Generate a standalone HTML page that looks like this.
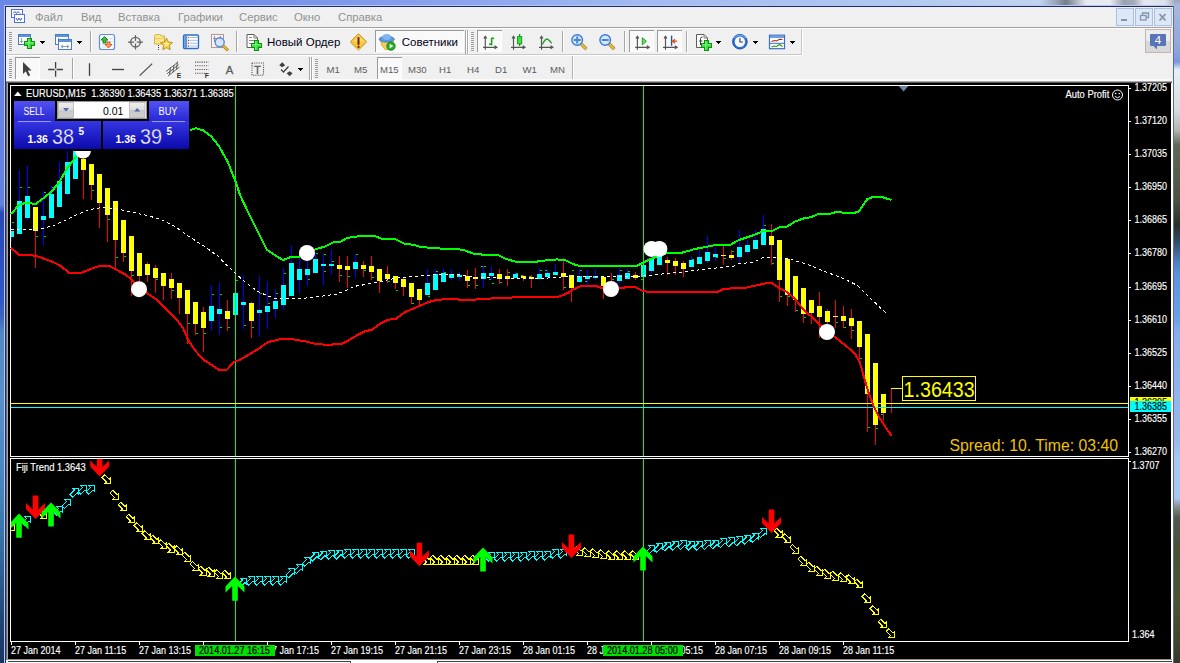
<!DOCTYPE html>
<html><head><meta charset="utf-8"><title>EURUSD,M15</title>
<style>
html,body{margin:0;padding:0;background:#000;overflow:hidden}
body{width:1180px;height:663px;position:relative;font-family:"Liberation Sans", sans-serif}
#frame{position:absolute;left:0;top:0;width:1180px;height:663px;background:linear-gradient(180deg,#6c88e6 0px,#6280de 205px,#2848b8 213px,#2c50c0 260px,#3058c8 300px,#3a64c0 316px,#5088c0 332px,#5890c8 400px,#4c8ac4 450px,#4282b8 500px,#3472a4 540px,#2a5c8c 580px,#1f4674 620px,#183460 663px)}
#topstrip{position:absolute;left:0;top:0;width:1180px;height:6px;background:linear-gradient(90deg,#6a86e6 0px,#7590e8 250px,#8ea6ee 480px,#a3bbf1 650px,#aec8f2 880px,#c0d4f0 1040px,#9aa4b8 1056px,#747c8c 1066px,#aab2c0 1076px,#e6eaf0 1086px,#e8ecf2 1110px,#9aa2b0 1124px,#a4acb8 1134px,#e4e8ee 1144px,#dde2ea 1165px,#8a94a8 1180px)}
#rightstrip{position:absolute;left:1174px;top:0;width:6px;height:663px;background:linear-gradient(180deg,#9aa6c0 0px,#a8b8e0 6px,#8ea4dc 50px,#7a98e0 62px,#e4f2fb 70px,#d8dce0 110px,#b4b6b4 130px,#606858 145px,#4c5242 200px,#283028 225px,#304860 240px,#4c80c0 262px,#5a94e0 275px,#6aa0e8 318px,#88aeec 332px,#98b8f0 440px,#a6c6f4 455px,#a8c8f4 498px,#808888 508px,#505850 518px,#485038 550px,#4c5436 600px,#40462f 640px,#34382c 663px)}
#win{position:absolute;left:6px;top:7px;width:1167px;height:656px;background:#f0f0f0}
svg{position:absolute;left:0;top:0}
text{font-family:"Liberation Sans", sans-serif}
</style></head><body>
<div id="frame"></div><div id="topstrip"></div><div id="rightstrip"></div>
<div id="win"></div>
<svg width="1180" height="663" viewBox="0 0 1180 663">

<rect x="4" y="5" width="1170" height="1" fill="#b9c6f2" />
<rect x="4" y="5" width="1" height="658" fill="#b9c6f2" />
<rect x="5" y="6" width="1169" height="1" fill="#1c2a6e" />
<rect x="5" y="6" width="1" height="657" fill="#1c2a6e" />
<rect x="1173" y="6" width="1" height="657" fill="#667074" />
<rect x="6" y="7" width="1166" height="20" fill="#f0f0f0" />
<rect x="6" y="27" width="1166" height="1" fill="#a0a0a0" />
<rect x="6" y="28" width="1166" height="1" fill="#ffffff" />
<rect x="6" y="54" width="796" height="1" fill="#c8c8c8" />
<rect x="6" y="55" width="796" height="1" fill="#ffffff" />
<rect x="801" y="29" width="1" height="26" fill="#c8c8c8" />
<rect x="802" y="29" width="1" height="27" fill="#ffffff" />
<rect x="572" y="56" width="1" height="24" fill="#b4b4b4" />
<rect x="573" y="56" width="1" height="24" fill="#ffffff" />
<rect x="6" y="79" width="1166" height="2" fill="#fafafa" />
<rect x="6" y="81" width="1166" height="1" fill="#a8a8a8" />
<rect x="6" y="82" width="1166" height="1" fill="#585858" />
<rect x="6" y="83" width="1165" height="576" fill="#000" />
<rect x="1171" y="83" width="2" height="577" fill="#ffffff" />
<rect x="6" y="83" width="1" height="576" fill="#6e6e6e" />
<rect x="7" y="83" width="1" height="576" fill="#a8a8a8" />
<rect x="6" y="659" width="1166" height="1" fill="#8c8c8c" />
<rect x="8" y="660" width="1164" height="3" fill="#ffffff" />
<rect x="8" y="661" width="343" height="1" fill="#404040" />
<rect x="437" y="661" width="735" height="1" fill="#404040" />
<rect x="350" y="661" width="1" height="2" fill="#404040" />
<rect x="437" y="661" width="1" height="2" fill="#404040" />
<g font-size="11.3" fill="#929292">
<text x="35" y="21">Файл</text>
<text x="81" y="21">Вид</text>
<text x="118" y="21">Вставка</text>
<text x="178" y="21">Графики</text>
<text x="239" y="21">Сервис</text>
<text x="294" y="21">Окно</text>
<text x="338" y="21">Справка</text>
</g>
<g fill="#fff" stroke="#4f70e8" stroke-width="1"><rect x="11.5" y="9.5" width="11" height="8"/><path d="M13 13.500 l2 -2 1.500 2 1.500 -2 2 2" fill="none" stroke="#3558d8"/><rect x="14.5" y="14.500" width="10" height="8"/></g>
<path d="M16 18 l1.5 2.5 l1.5 -2.5 l1.5 2.5 l1.5 -2.5" stroke="#3558d8" fill="none" stroke-width="1"/>
<rect x="1116.5" y="8.5" width="17" height="17" fill="#dde8f6" stroke="#a9c0e2"/>
<rect x="1135.5" y="8.5" width="17" height="17" fill="#dde8f6" stroke="#a9c0e2"/>
<rect x="1154.5" y="8.5" width="17" height="17" fill="#dde8f6" stroke="#a9c0e2"/>
<rect x="1121" y="19" width="6" height="2" fill="#8494ac"/>
<g fill="none" stroke="#8494ac" stroke-width="1.3"><rect x="1140.5" y="15.5" width="5.500" height="4.500"/><path d="M1142.5 15 v-2 h6 v4.500 h-2"/></g>
<path d="M1159.500 14 l6 6.500 M1165.500 14 l-6 6.500" stroke="#8494ac" stroke-width="1.8"/>
<rect x="1145.5" y="29.5" width="25" height="23" fill="#ececec" stroke="#c4b4b4"/>
<rect x="1146" y="41" width="24" height="11" fill="#d8d8d8"/>
<path d="M1151 34 h14 a1 1 0 0 1 1 1 v10 a1 1 0 0 1 -1 1 h-8 v3.5 l-3.5 -3.5 h-2.500 a1 1 0 0 1 -1 -1 v-10 a1 1 0 0 1 1 -1z" fill="#5a74b8"/>
<text x="1154.8" y="44" font-size="11.5" fill="#fff" >4</text>
<rect x="9" y="32" width="3" height="1" fill="#9c9c9c" />
<rect x="9" y="34" width="3" height="1" fill="#9c9c9c" />
<rect x="9" y="36" width="3" height="1" fill="#9c9c9c" />
<rect x="9" y="38" width="3" height="1" fill="#9c9c9c" />
<rect x="9" y="40" width="3" height="1" fill="#9c9c9c" />
<rect x="9" y="42" width="3" height="1" fill="#9c9c9c" />
<rect x="9" y="44" width="3" height="1" fill="#9c9c9c" />
<rect x="9" y="46" width="3" height="1" fill="#9c9c9c" />
<rect x="9" y="48" width="3" height="1" fill="#9c9c9c" />
<rect x="9" y="50" width="3" height="1" fill="#9c9c9c" />
<rect x="9" y="59" width="3" height="1" fill="#9c9c9c" />
<rect x="9" y="61" width="3" height="1" fill="#9c9c9c" />
<rect x="9" y="63" width="3" height="1" fill="#9c9c9c" />
<rect x="9" y="65" width="3" height="1" fill="#9c9c9c" />
<rect x="9" y="67" width="3" height="1" fill="#9c9c9c" />
<rect x="9" y="69" width="3" height="1" fill="#9c9c9c" />
<rect x="9" y="71" width="3" height="1" fill="#9c9c9c" />
<rect x="9" y="73" width="3" height="1" fill="#9c9c9c" />
<rect x="9" y="75" width="3" height="1" fill="#9c9c9c" />
<rect x="9" y="77" width="3" height="1" fill="#9c9c9c" />
<rect x="315" y="59" width="3" height="1" fill="#9c9c9c" />
<rect x="315" y="61" width="3" height="1" fill="#9c9c9c" />
<rect x="315" y="63" width="3" height="1" fill="#9c9c9c" />
<rect x="315" y="65" width="3" height="1" fill="#9c9c9c" />
<rect x="315" y="67" width="3" height="1" fill="#9c9c9c" />
<rect x="315" y="69" width="3" height="1" fill="#9c9c9c" />
<rect x="315" y="71" width="3" height="1" fill="#9c9c9c" />
<rect x="315" y="73" width="3" height="1" fill="#9c9c9c" />
<rect x="315" y="75" width="3" height="1" fill="#9c9c9c" />
<rect x="315" y="77" width="3" height="1" fill="#9c9c9c" />
<rect x="471" y="32" width="3" height="1" fill="#9c9c9c" />
<rect x="471" y="34" width="3" height="1" fill="#9c9c9c" />
<rect x="471" y="36" width="3" height="1" fill="#9c9c9c" />
<rect x="471" y="38" width="3" height="1" fill="#9c9c9c" />
<rect x="471" y="40" width="3" height="1" fill="#9c9c9c" />
<rect x="471" y="42" width="3" height="1" fill="#9c9c9c" />
<rect x="471" y="44" width="3" height="1" fill="#9c9c9c" />
<rect x="471" y="46" width="3" height="1" fill="#9c9c9c" />
<rect x="471" y="48" width="3" height="1" fill="#9c9c9c" />
<rect x="471" y="50" width="3" height="1" fill="#9c9c9c" />
<rect x="90" y="31" width="1" height="21" fill="#a6a6a6" />
<rect x="91" y="31" width="1" height="21" fill="#ffffff" />
<rect x="236" y="31" width="1" height="21" fill="#a6a6a6" />
<rect x="237" y="31" width="1" height="21" fill="#ffffff" />
<rect x="562" y="31" width="1" height="21" fill="#a6a6a6" />
<rect x="563" y="31" width="1" height="21" fill="#ffffff" />
<rect x="624" y="31" width="1" height="21" fill="#a6a6a6" />
<rect x="625" y="31" width="1" height="21" fill="#ffffff" />
<rect x="686" y="31" width="1" height="21" fill="#a6a6a6" />
<rect x="687" y="31" width="1" height="21" fill="#ffffff" />
<rect x="465" y="30" width="1" height="24" fill="#a6a6a6" />
<rect x="466" y="30" width="1" height="24" fill="#ffffff" />
<rect x="467" y="30" width="1" height="24" fill="#a6a6a6" />
<rect x="468" y="30" width="1" height="24" fill="#ffffff" />
<rect x="72" y="58" width="1" height="21" fill="#a6a6a6" />
<rect x="73" y="58" width="1" height="21" fill="#ffffff" />
<rect x="309" y="57" width="1" height="23" fill="#a6a6a6" />
<rect x="310" y="57" width="1" height="23" fill="#ffffff" />
<rect x="311" y="57" width="1" height="23" fill="#a6a6a6" />
<rect x="312" y="57" width="1" height="23" fill="#ffffff" />
<rect x="375" y="30" width="89" height="22" fill="#f9f9f9"/>
<rect x="375" y="30" width="89" height="1" fill="#9a9a9a" />
<rect x="375" y="30" width="1" height="22" fill="#9a9a9a" />
<rect x="463" y="31" width="1" height="21" fill="#ffffff" />
<rect x="376" y="51" width="88" height="1" fill="#ffffff" />
<rect x="477" y="30" width="25" height="22" fill="#f9f9f9"/>
<rect x="477" y="30" width="25" height="1" fill="#9a9a9a" />
<rect x="477" y="30" width="1" height="22" fill="#9a9a9a" />
<rect x="501" y="31" width="1" height="21" fill="#ffffff" />
<rect x="478" y="51" width="24" height="1" fill="#ffffff" />
<rect x="629" y="30" width="25" height="22" fill="#f9f9f9"/>
<rect x="629" y="30" width="25" height="1" fill="#9a9a9a" />
<rect x="629" y="30" width="1" height="22" fill="#9a9a9a" />
<rect x="653" y="31" width="1" height="21" fill="#ffffff" />
<rect x="630" y="51" width="24" height="1" fill="#ffffff" />
<rect x="657" y="30" width="25" height="22" fill="#f9f9f9"/>
<rect x="657" y="30" width="25" height="1" fill="#9a9a9a" />
<rect x="657" y="30" width="1" height="22" fill="#9a9a9a" />
<rect x="681" y="31" width="1" height="21" fill="#ffffff" />
<rect x="658" y="51" width="24" height="1" fill="#ffffff" />
<rect x="15" y="57" width="25" height="22" fill="#f9f9f9"/>
<rect x="15" y="57" width="25" height="1" fill="#9a9a9a" />
<rect x="15" y="57" width="1" height="22" fill="#9a9a9a" />
<rect x="39" y="58" width="1" height="21" fill="#ffffff" />
<rect x="16" y="78" width="24" height="1" fill="#ffffff" />
<rect x="377" y="57" width="25" height="22" fill="#f9f9f9"/>
<rect x="377" y="57" width="25" height="1" fill="#9a9a9a" />
<rect x="377" y="57" width="1" height="22" fill="#9a9a9a" />
<rect x="401" y="58" width="1" height="21" fill="#ffffff" />
<rect x="378" y="78" width="24" height="1" fill="#ffffff" />
<path d="M40.0 41 h5 l-2.5 3z" fill="#000" shape-rendering="crispEdges"/>
<rect x="40.0" y="41" width="5" height="1" fill="#000" />
<rect x="41.0" y="42" width="3" height="1" fill="#000" />
<rect x="42.0" y="43" width="1" height="1" fill="#000" />
<path d="M77.0 41 h5 l-2.5 3z" fill="#000" shape-rendering="crispEdges"/>
<rect x="77.0" y="41" width="5" height="1" fill="#000" />
<rect x="78.0" y="42" width="3" height="1" fill="#000" />
<rect x="79.0" y="43" width="1" height="1" fill="#000" />
<path d="M716.0 41 h5 l-2.5 3z" fill="#000" shape-rendering="crispEdges"/>
<rect x="716.0" y="41" width="5" height="1" fill="#000" />
<rect x="717.0" y="42" width="3" height="1" fill="#000" />
<rect x="718.0" y="43" width="1" height="1" fill="#000" />
<path d="M753.0 41 h5 l-2.5 3z" fill="#000" shape-rendering="crispEdges"/>
<rect x="753.0" y="41" width="5" height="1" fill="#000" />
<rect x="754.0" y="42" width="3" height="1" fill="#000" />
<rect x="755.0" y="43" width="1" height="1" fill="#000" />
<path d="M790.0 41 h5 l-2.5 3z" fill="#000" shape-rendering="crispEdges"/>
<rect x="790.0" y="41" width="5" height="1" fill="#000" />
<rect x="791.0" y="42" width="3" height="1" fill="#000" />
<rect x="792.0" y="43" width="1" height="1" fill="#000" />
<path d="M298.0 68 h5 l-2.5 3z" fill="#000" shape-rendering="crispEdges"/>
<rect x="298.0" y="68" width="5" height="1" fill="#000" />
<rect x="299.0" y="69" width="3" height="1" fill="#000" />
<rect x="300.0" y="70" width="1" height="1" fill="#000" />
<rect x="18.5" y="34.5" width="12" height="10" fill="#fdfdff" stroke="#4a7cc8"/><rect x="19" y="35" width="11" height="2" fill="#5a94dc"/><path d="M21.500 38 v5 M20 41.500 h3" stroke="#8a9cc0" fill="none"/>
<polygon points="27,38 32,38 32,41 35,41 35,46 32,46 32,49 27,49 27,46 24,46 24,41 27,41" fill="#0f8f12"/>
<polygon points="28,39 31,39 31,42 34,42 34,45 31,45 31,48 28,48 28,45 25,45 25,42 28,42" fill="#2fd834"/>
<rect x="28" y="39" width="1.5" height="9" fill="#7cf07e" opacity="0.8"/><rect x="25" y="42" width="9" height="1.5" fill="#7cf07e" opacity="0.8"/>
<rect x="55.5" y="34.5" width="13" height="10" fill="#fdfdff" stroke="#4a7cc8"/><rect x="56" y="35" width="12" height="2" fill="#5a94dc"/><path d="M58.500 38 v5 M58 41.500 h8 M64 40 l2 1.500 -2 1.500" stroke="#8a9cc0" fill="none"/>
<rect x="58.5" y="39.5" width="13" height="10" fill="#fdfdff" stroke="#4a7cc8"/><rect x="59" y="40" width="12" height="2" fill="#5a94dc"/><path d="M61 46.500 h8 M63 45 l-2 1.500 2 1.500 M67 45 l2 1.500 -2 1.500" stroke="#8a9cc0" fill="none"/>
<rect x="99.5" y="34.5" width="15" height="15" rx="2" fill="#fbfcff" stroke="#5a8ee0" stroke-width="1.2"/><path d="M109 38.500 h4 M109 41.500 h4 M102 44.500 h4 M102 47 h4" stroke="#d8dce8"/>
<path d="M104.500 36.500 l3.500 3.500 h-2 v3 h-3 v-3 h-2z" fill="#38c038" stroke="#0f8010" stroke-width="0.9"/><path d="M108.500 48 l-3.500 -3.500 h2 v-2.500 h3 v2.500 h2z" fill="#f0a060" stroke="#e04818" stroke-width="0.9"/>
<circle cx="135.500" cy="42.200" r="4.800" fill="none" stroke="#646464" stroke-width="1.4"/><path d="M135.500 35 v6 M135.500 43.500 v6 M128 42.200 h6.200 M136.800 42.200 h6.200" stroke="#646464" stroke-width="1.2"/>
<path d="M154.500 36.500 q0 -2 2 -2 h3 q1.500 0 2 1.500 h3 v8 h-10z" fill="#fae68c" stroke="#d4aa38" stroke-width="0.9"/><path d="M155 38.500 h9.500" stroke="#e8c860" stroke-width="0.8"/>
<path d="M158.500 45 v5" stroke="#404040" stroke-dasharray="1,1"/>
<path d="M166.500 38.200 l1.900 3.800 4.100 .6 -3 2.900 .7 4.200 -3.700 -2 -3.700 2 .7 -4.200 -3 -2.900 4.100 -.6z" fill="#f6d040" stroke="#b48a14" stroke-width="0.9"/><path d="M166.500 41 l1 2 2 .3 -1.500 1.400 .4 2 -1.900 -1 -1.900 1 .4 -2 -1.500 -1.400 2 -.3z" fill="#fcec98"/>
<rect x="183.500" y="35" width="15" height="13.500" rx="1.200" fill="#ffffff" stroke="#2c6cc4" stroke-width="1.300"/><rect x="184.200" y="35.700" width="3" height="12.200" fill="#5a94dc"/><path d="M190 37.500 h8 M190 40.300 h8 M190 43.200 h8 M190 46 h8" stroke="#86aee8" stroke-width="0.8"/><path d="M188 37.500 h1.200 M188 43.200 h1.200" stroke="#e02010" stroke-width="1.2"/><path d="M188 40.300 h1.200 M188 46 h1.200" stroke="#202020" stroke-width="1"/>
<rect x="211.500" y="34.500" width="12" height="13" fill="#f6f2f0" stroke="#b49898"/><path d="M214.500 36 v6 M220.500 36 v5 M213 38.500 h9" stroke="#8a94b0" fill="none"/><circle cx="219.700" cy="42.200" r="4.500" fill="#d2e4fa" fill-opacity="0.85" stroke="#5a8cd8" stroke-width="1.400"/><path d="M223.200 45.700 l4.800 4.800" stroke="#a87c10" stroke-width="3"/><path d="M223.200 45.700 l4.600 4.600" stroke="#e8c040" stroke-width="1.600"/>
<path d="M247 34.500 h7 l3.500 3.500 v9.500 h-10.500z" fill="#fff" stroke="#5c5c5c"/><path d="M254 34.500 v3.500 h3.500" fill="none" stroke="#5c5c5c" stroke-width="0.8"/><path d="M249 37.500 h3 M249 40.500 h6 M249 43.500 h3" stroke="#8a8a8a" stroke-width="1.2"/>
<polygon points="254,40 259,40 259,43 262,43 262,48 259,48 259,51 254,51 254,48 251,48 251,43 254,43" fill="#0f8f12"/>
<polygon points="255,41 258,41 258,44 261,44 261,47 258,47 258,50 255,50 255,47 252,47 252,44 255,44" fill="#2fd834"/>
<rect x="255" y="41" width="1.5" height="9" fill="#7cf07e" opacity="0.8"/><rect x="252" y="44" width="9" height="1.5" fill="#7cf07e" opacity="0.8"/>
<text x="267" y="45.6" font-size="11.5" fill="#000018" >Новый Ордер</text>
<path d="M358.500 34.200 l7.200 7.200 q.500 .500 0 1 l-7.200 7.200 q-.500 .500 -1 0 l-7.200 -7.200 q-.500 -.500 0 -1 l7.200 -7.200 q.500 -.500 1 0z" transform="translate(.5,0)" fill="#f4c838" stroke="#c8941a"/><path d="M358.500 36 l5.500 5.500 h-11z" transform="translate(.5,0)" fill="#fbe27a" opacity="0.8"/><rect x="357.500" y="37" width="2" height="8" rx="0.800" fill="#7c1c00"/><rect x="357.500" y="45.800" width="2" height="2" fill="#7c1c00"/>
<path d="M380.500 40 h13 q0 5 -4.500 9.500 h-4 q-4.500 -4.500 -4.500 -9.500z" fill="#f4cf58" stroke="#d0a020" stroke-width="0.8"/><ellipse cx="386.700" cy="39.200" rx="7.600" ry="3" fill="#5c98dc" stroke="#3a78c8" stroke-width="0.7"/><ellipse cx="386.700" cy="37" rx="4.200" ry="3" fill="#82b6ec"/><circle cx="391" cy="46.100" r="4.200" fill="#1fae22" stroke="#0c8010" stroke-width="0.8"/><path d="M389.700 43.800 v4.600 l3.600 -2.300z" fill="#fff"/>
<text x="401.8" y="45.8" font-size="11.5" fill="#000018" >Советники</text>
<path d="M485.3 36.500 v13.300 M483 47.300 h13.699999999999989 M483.8 38.500 l1.500 -2.300 1.500 2.300 M494.5 45.800 l2.400 1.500 -2.400 1.500" stroke="#555555" fill="none" stroke-width="1.150"/>
<path d="M491.600 37.700 v7.600 M489 44.300 h2.600 M491.600 38.300 h2.500" stroke="#18a01c" stroke-width="1.600" fill="none"/>
<path d="M513.5 36.500 v13.300 M511 47.300 h13.799999999999955 M512.0 38.500 l1.500 -2.300 1.500 2.300 M522.5999999999999 45.800 l2.400 1.500 -2.400 1.500" stroke="#555555" fill="none" stroke-width="1.150"/>
<path d="M519.600 34 v12" stroke="#18a01c" stroke-width="1.400"/><rect x="517.500" y="36.600" width="4.200" height="7.200" fill="#40e044" stroke="#18a01c" stroke-width="1"/>
<path d="M541.5 36.500 v13.300 M539 47.300 h13.700000000000045 M540.0 38.500 l1.500 -2.300 1.500 2.300 M550.5 45.800 l2.400 1.500 -2.400 1.500" stroke="#555555" fill="none" stroke-width="1.150"/>
<path d="M542.300 44.300 q2.500 -4.500 4.300 -5.300 q2 0 5 4.300" stroke="#2aa02e" stroke-width="1.400" fill="none"/>
<path d="M581.2 44 l5.200 5.200" stroke="#a07810" stroke-width="3.200"/><path d="M581.2 44 l5 5" stroke="#e6c244" stroke-width="1.800"/><circle cx="577.2" cy="40" r="5.300" fill="#d4e6fa" stroke="#3a7ad8" stroke-width="1.400"/><path d="M573.7 40 h7" stroke="#4a88c0" stroke-width="2"/>
<path d="M577.2 36.500 v7" stroke="#4a88c0" stroke-width="2"/>
<path d="M609.2 44 l5.200 5.200" stroke="#a07810" stroke-width="3.200"/><path d="M609.2 44 l5 5" stroke="#e6c244" stroke-width="1.800"/><circle cx="605.2" cy="40" r="5.300" fill="#d4e6fa" stroke="#3a7ad8" stroke-width="1.400"/><path d="M601.7 40 h7" stroke="#4a88c0" stroke-width="2"/>
<path d="M637.4 36.500 v13.300 M635.2 47.300 h13.799999999999955 M635.9 38.500 l1.500 -2.300 1.500 2.300 M646.8 45.800 l2.400 1.500 -2.400 1.500" stroke="#555555" fill="none" stroke-width="1.150"/>
<path d="M642.300 37.700 v7.100 l4 -3.500z" fill="#6ce070" stroke="#18a01c" stroke-width="1"/>
<path d="M665.5 36.500 v13.300 M663 47.300 h14 M664.0 38.500 l1.500 -2.300 1.500 2.300 M674.8 45.800 l2.400 1.500 -2.400 1.500" stroke="#555555" fill="none" stroke-width="1.150"/>
<path d="M671.600 35.600 v10.200" stroke="#1c58b0" stroke-width="1.400"/><path d="M677 41.200 h-4.500 m2.500 -2 l-2.500 2 2.500 2" stroke="#e04810" stroke-width="1.200" fill="none"/>
<path d="M696.500 34.500 h7.500 l3.500 3.500 v9.500 h-11z" fill="#fff" stroke="#5c5c5c"/><path d="M704 34.500 v3.500 h3.500" fill="none" stroke="#5c5c5c" stroke-width="0.8"/><path d="M700.500 45 v-6.500 q0 -1.500 2 -1.500 M699 41 h3.500" stroke="#404040" fill="none"/>
<polygon points="704,40 709,40 709,43 712,43 712,48 709,48 709,51 704,51 704,48 701,48 701,43 704,43" fill="#0f8f12"/>
<polygon points="705,41 708,41 708,44 711,44 711,47 708,47 708,50 705,50 705,47 702,47 702,44 705,44" fill="#2fd834"/>
<rect x="705" y="41" width="1.5" height="9" fill="#7cf07e" opacity="0.8"/><rect x="702" y="44" width="9" height="1.5" fill="#7cf07e" opacity="0.8"/>
<circle cx="739.900" cy="41.700" r="7.300" fill="#2c72dc" stroke="#1c50a8" stroke-width="1"/><circle cx="739.900" cy="41.700" r="5.200" fill="#f6f9ff"/><path d="M739.900 38 v4 h3" stroke="#404040" fill="none" stroke-width="1.100"/><path d="M734 38 q6 -6 12 0" stroke="#7cb0f4" fill="none" stroke-width="1"/>
<rect x="769.500" y="35.200" width="15" height="13.500" fill="#fff" stroke="#3c6cc4" stroke-width="1.200"/><rect x="770" y="35.700" width="14" height="2.300" fill="#6aa0e4"/><path d="M770 43.300 h14" stroke="#3c6cc4" stroke-width="1"/><path d="M771.500 41.500 l3 -1 2 .5 3 -1.800 3 .3" stroke="#b02810" fill="none" stroke-width="1.100"/><path d="M771.500 47 l3 -1 2 .5 3 -2 3 2" stroke="#18a01c" fill="none" stroke-width="1.100"/>
<path d="M23 62 v12 l2.800 -2.700 2.400 5 2 -1 -2.400 -4.900 h3.800z" fill="#404040"/>
<path d="M55.600 62 v6.500 M55.600 70.500 v6.200 M48.200 69.500 h6.400 M56.600 69.500 h6.300" stroke="#404040" stroke-width="1.300"/>
<path d="M89.500 63.200 v12.700" stroke="#404040" stroke-width="1.300"/><path d="M112 69.500 h12" stroke="#404040" stroke-width="1.300"/><path d="M139.700 75.600 l12.500 -12" stroke="#505050" stroke-width="1.300"/>
<path d="M166 71.500 l11.500 -9 M168 76 l11.500 -9 M167 73.800 l11.500 -9" stroke="#505050" stroke-width="0.900" fill="none"/><path d="M170.500 67.500 l-1 7 M174 65 l-1 7 M177.500 61.500 l-1 7.500" stroke="#505050" stroke-width="0.900" fill="none"/>
<text x="176.8" y="77.8" font-size="6.8" fill="#303030" font-weight="bold">E</text>
<path d="M195 62.100 h13.500 M195 65.700 h13.500 M195 69.500 h13.500 M195 73.300 h10" stroke="#505050" stroke-width="1.100" stroke-dasharray="1.100,1.100"/>
<text x="204.8" y="77.8" font-size="6.8" fill="#303030" font-weight="bold">F</text>
<text x="225.7" y="73.5" font-size="11.3" fill="#5a5a5a" stroke="#5a5a5a" stroke-width="0.300">A</text>
<rect x="252" y="63" width="11.500" height="12.200" fill="none" stroke="#505050" stroke-width="1.100" stroke-dasharray="1.100,1.100"/>
<text x="254" y="73.5" font-size="11.3" fill="#5a5a5a" stroke="#5a5a5a" stroke-width="0.300">T</text>
<path d="M282.200 62.300 l3 3 -3 2 -3 -2z M289.600 76.300 l3 -3 -3 -2 -3 2z" fill="#404040"/><path d="M281 69.500 l2.500 2.500 5 -5.500" stroke="#404040" fill="none" stroke-width="1.300"/>
<g font-size="9.600" fill="#5c5c5c">
<text x="326.6" y="72.800">M1</text>
<text x="354" y="72.800">M5</text>
<text x="380" y="72.800">M15</text>
<text x="408" y="72.800">M30</text>
<text x="439" y="72.800">H1</text>
<text x="467" y="72.800">H4</text>
<text x="495" y="72.800">D1</text>
<text x="522.5" y="72.800">W1</text>
<text x="550" y="72.800">MN</text>
</g>
<g shape-rendering="crispEdges">
<rect x="10" y="85" width="1119" height="1" fill="#fff" />
<rect x="10" y="85" width="1" height="372" fill="#fff" />
<rect x="1128" y="85" width="1" height="372" fill="#fff" />
<rect x="10" y="456" width="1119" height="1" fill="#fff" />
<rect x="10" y="458" width="1119" height="1" fill="#fff" />
<rect x="10" y="458" width="1" height="184" fill="#fff" />
<rect x="1128" y="458" width="1" height="184" fill="#fff" />
<rect x="10" y="641" width="1119" height="1" fill="#fff" />
<rect x="1129" y="88" width="2" height="1" fill="#fff" />
<rect x="1129" y="121" width="2" height="1" fill="#fff" />
<rect x="1129" y="154" width="2" height="1" fill="#fff" />
<rect x="1129" y="187" width="2" height="1" fill="#fff" />
<rect x="1129" y="220" width="2" height="1" fill="#fff" />
<rect x="1129" y="253" width="2" height="1" fill="#fff" />
<rect x="1129" y="287" width="2" height="1" fill="#fff" />
<rect x="1129" y="320" width="2" height="1" fill="#fff" />
<rect x="1129" y="353" width="2" height="1" fill="#fff" />
<rect x="1129" y="386" width="2" height="1" fill="#fff" />
<rect x="1129" y="419" width="2" height="1" fill="#fff" />
<rect x="1129" y="452" width="2" height="1" fill="#fff" />
<rect x="1129" y="461" width="2" height="1" fill="#fff" />
<rect x="11" y="642" width="1" height="3" fill="#fff" />
<rect x="75" y="642" width="1" height="3" fill="#fff" />
<rect x="139" y="642" width="1" height="3" fill="#fff" />
<rect x="203" y="642" width="1" height="3" fill="#fff" />
<rect x="267" y="642" width="1" height="3" fill="#fff" />
<rect x="331" y="642" width="1" height="3" fill="#fff" />
<rect x="395" y="642" width="1" height="3" fill="#fff" />
<rect x="459" y="642" width="1" height="3" fill="#fff" />
<rect x="523" y="642" width="1" height="3" fill="#fff" />
<rect x="587" y="642" width="1" height="3" fill="#fff" />
<rect x="651" y="642" width="1" height="3" fill="#fff" />
<rect x="715" y="642" width="1" height="3" fill="#fff" />
<rect x="779" y="642" width="1" height="3" fill="#fff" />
<rect x="843" y="642" width="1" height="3" fill="#fff" />
</g>
<g font-size="9" fill="#fff" stroke="#fff" stroke-width="0.15">
<text x="1134.5" y="91" font-size="10.0" transform="matrix(0.9000 0 0 1 113.450 0)">1.37205</text>
<text x="1134.5" y="124" font-size="10.0" transform="matrix(0.9000 0 0 1 113.450 0)">1.37120</text>
<text x="1134.5" y="157" font-size="10.0" transform="matrix(0.9000 0 0 1 113.450 0)">1.37035</text>
<text x="1134.5" y="190" font-size="10.0" transform="matrix(0.9000 0 0 1 113.450 0)">1.36950</text>
<text x="1134.5" y="223" font-size="10.0" transform="matrix(0.9000 0 0 1 113.450 0)">1.36865</text>
<text x="1134.5" y="256" font-size="10.0" transform="matrix(0.9000 0 0 1 113.450 0)">1.36780</text>
<text x="1134.5" y="290" font-size="10.0" transform="matrix(0.9000 0 0 1 113.450 0)">1.36695</text>
<text x="1134.5" y="323" font-size="10.0" transform="matrix(0.9000 0 0 1 113.450 0)">1.36610</text>
<text x="1134.5" y="356" font-size="10.0" transform="matrix(0.9000 0 0 1 113.450 0)">1.36525</text>
<text x="1134.5" y="389" font-size="10.0" transform="matrix(0.9000 0 0 1 113.450 0)">1.36440</text>
<text x="1134.5" y="422" font-size="10.0" transform="matrix(0.9000 0 0 1 113.450 0)">1.36355</text>
<text x="1134.5" y="455" font-size="10.0" transform="matrix(0.9000 0 0 1 113.450 0)">1.36270</text>
<text x="1132" y="469" font-size="10.0" transform="matrix(0.9000 0 0 1 113.200 0)">1.3707</text><text x="1132" y="638" font-size="10.0" transform="matrix(0.9000 0 0 1 113.200 0)">1.364</text>
<text x="11" y="654" font-size="10.0" transform="matrix(0.9000 0 0 1 1.100 0)">27 Jan 2014</text>
<text x="75" y="654" font-size="10.0" transform="matrix(0.9000 0 0 1 7.500 0)">27 Jan 11:15</text>
<text x="139" y="654" font-size="10.0" transform="matrix(0.9000 0 0 1 13.900 0)">27 Jan 13:15</text>
<text x="203" y="654" font-size="10.0" transform="matrix(0.9000 0 0 1 20.300 0)">27 Jan 15:15</text>
<text x="267" y="654" font-size="10.0" transform="matrix(0.9000 0 0 1 26.700 0)">27 Jan 17:15</text>
<text x="331" y="654" font-size="10.0" transform="matrix(0.9000 0 0 1 33.100 0)">27 Jan 19:15</text>
<text x="395" y="654" font-size="10.0" transform="matrix(0.9000 0 0 1 39.500 0)">27 Jan 21:15</text>
<text x="459" y="654" font-size="10.0" transform="matrix(0.9000 0 0 1 45.900 0)">27 Jan 23:15</text>
<text x="523" y="654" font-size="10.0" transform="matrix(0.9000 0 0 1 52.300 0)">28 Jan 01:15</text>
<text x="587" y="654" font-size="10.0" transform="matrix(0.9000 0 0 1 58.700 0)">28 Jan 03:15</text>
<text x="651" y="654" font-size="10.0" transform="matrix(0.9000 0 0 1 65.100 0)">28 Jan 05:15</text>
<text x="715" y="654" font-size="10.0" transform="matrix(0.9000 0 0 1 71.500 0)">28 Jan 07:15</text>
<text x="779" y="654" font-size="10.0" transform="matrix(0.9000 0 0 1 77.900 0)">28 Jan 09:15</text>
<text x="843" y="654" font-size="10.0" transform="matrix(0.9000 0 0 1 84.300 0)">28 Jan 11:15</text>
</g>
<rect x="195" y="645" width="80" height="11" fill="#00e000" shape-rendering="crispEdges"/>
<rect x="603" y="645" width="80" height="11" fill="#00e000" shape-rendering="crispEdges"/>
<text x="199" y="654" font-size="10.0" fill="#000" transform="matrix(0.9100 0 0 1 17.910 0)" stroke="#000" stroke-width="0.25">2014.01.27 16:15</text>
<text x="607" y="654" font-size="10.0" fill="#000" transform="matrix(0.9100 0 0 1 54.630 0)" stroke="#000" stroke-width="0.25">2014.01.28 05:00</text>
<g shape-rendering="crispEdges" fill="#00e000">
<rect x="20" y="187" width="2" height="1" fill="#00d800" />
<rect x="28" y="187" width="2" height="1" fill="#00d800" />
<rect x="12" y="222" width="2" height="1" fill="#00d800" />
<rect x="44" y="192" width="2" height="1" fill="#00d800" />
<rect x="52" y="187" width="2" height="1" fill="#00d800" />
<rect x="36" y="236" width="2" height="1" fill="#00d800" />
<rect x="44" y="236" width="2" height="1" fill="#00d800" />
<rect x="89" y="176" width="2" height="1" fill="#00d800" />
<rect x="92" y="190" width="2" height="1" fill="#00d800" />
<rect x="108" y="219" width="2" height="1" fill="#00d800" />
<rect x="116" y="257" width="2" height="1" fill="#00d800" />
<rect x="124" y="256" width="2" height="1" fill="#00d800" />
<rect x="132" y="275" width="2" height="1" fill="#00d800" />
<rect x="148" y="272" width="2" height="1" fill="#00d800" />
<rect x="156" y="279" width="2" height="1" fill="#00d800" />
<rect x="169" y="287" width="2" height="1" fill="#00d800" />
<rect x="172" y="290" width="2" height="1" fill="#00d800" />
<rect x="188" y="323" width="2" height="1" fill="#00d800" />
<rect x="196" y="333" width="2" height="1" fill="#00d800" />
<rect x="204" y="333" width="2" height="1" fill="#00d800" />
<rect x="212" y="294" width="2" height="1" fill="#00d800" />
<rect x="220" y="294" width="2" height="1" fill="#00d800" />
<rect x="220" y="327" width="2" height="1" fill="#00d800" />
<rect x="228" y="327" width="2" height="1" fill="#00d800" />
<rect x="236" y="280" width="2" height="1" fill="#00d800" />
<rect x="244" y="325" width="2" height="1" fill="#00d800" />
<rect x="252" y="327" width="2" height="1" fill="#00d800" />
<rect x="260" y="293" width="2" height="1" fill="#00d800" />
<rect x="268" y="303" width="2" height="1" fill="#00d800" />
<rect x="276" y="293" width="2" height="1" fill="#00d800" />
<rect x="284" y="273" width="2" height="1" fill="#00d800" />
<rect x="300" y="277" width="2" height="1" fill="#00d800" />
<rect x="308" y="279" width="2" height="1" fill="#00d800" />
<rect x="316" y="253" width="2" height="1" fill="#00d800" />
<rect x="324" y="254" width="2" height="1" fill="#00d800" />
<rect x="324" y="271" width="2" height="1" fill="#00d800" />
<rect x="332" y="261" width="2" height="1" fill="#00d800" />
<rect x="340" y="275" width="2" height="1" fill="#00d800" />
<rect x="348" y="276" width="2" height="1" fill="#00d800" />
<rect x="356" y="254" width="2" height="1" fill="#00d800" />
<rect x="356" y="254" width="2" height="1" fill="#00d800" />
<rect x="364" y="270" width="2" height="1" fill="#00d800" />
<rect x="372" y="277" width="2" height="1" fill="#00d800" />
<rect x="380" y="281" width="2" height="1" fill="#00d800" />
<rect x="388" y="281" width="2" height="1" fill="#00d800" />
<rect x="396" y="290" width="2" height="1" fill="#00d800" />
<rect x="412" y="303" width="2" height="1" fill="#00d800" />
<rect x="420" y="304" width="2" height="1" fill="#00d800" />
<rect x="428" y="296" width="2" height="1" fill="#00d800" />
<rect x="436" y="271" width="2" height="1" fill="#00d800" />
<rect x="444" y="272" width="2" height="1" fill="#00d800" />
<rect x="460" y="276" width="2" height="1" fill="#00d800" />
<rect x="468" y="285" width="2" height="1" fill="#00d800" />
<rect x="476" y="285" width="2" height="1" fill="#00d800" />
<rect x="481" y="266" width="2" height="1" fill="#00d800" />
<rect x="484" y="266" width="2" height="1" fill="#00d800" />
<rect x="489" y="279" width="2" height="1" fill="#00d800" />
<rect x="492" y="283" width="2" height="1" fill="#00d800" />
<rect x="500" y="282" width="2" height="1" fill="#00d800" />
<rect x="508" y="272" width="2" height="1" fill="#00d800" />
<rect x="516" y="273" width="2" height="1" fill="#00d800" />
<rect x="521" y="275" width="2" height="1" fill="#00d800" />
<rect x="529" y="276" width="2" height="1" fill="#00d800" />
<rect x="540" y="270" width="2" height="1" fill="#00d800" />
<rect x="545" y="270" width="2" height="1" fill="#00d800" />
<rect x="548" y="273" width="2" height="1" fill="#00d800" />
<rect x="564" y="287" width="2" height="1" fill="#00d800" />
<rect x="572" y="270" width="2" height="1" fill="#00d800" />
<rect x="580" y="270" width="2" height="1" fill="#00d800" />
<rect x="585" y="281" width="2" height="1" fill="#00d800" />
<rect x="588" y="278" width="2" height="1" fill="#00d800" />
<rect x="596" y="277" width="2" height="1" fill="#00d800" />
<rect x="612" y="279" width="2" height="1" fill="#00d800" />
<rect x="620" y="270" width="2" height="1" fill="#00d800" />
<rect x="628" y="271" width="2" height="1" fill="#00d800" />
<rect x="636" y="276" width="2" height="1" fill="#00d800" />
<rect x="641" y="279" width="2" height="1" fill="#00d800" />
<rect x="692" y="259" width="2" height="1" fill="#00d800" />
<rect x="700" y="258" width="2" height="1" fill="#00d800" />
<rect x="716" y="257" width="2" height="1" fill="#00d800" />
<rect x="724" y="258" width="2" height="1" fill="#00d800" />
<rect x="732" y="251" width="2" height="1" fill="#00d800" />
<rect x="740" y="250" width="2" height="1" fill="#00d800" />
<rect x="756" y="240" width="2" height="1" fill="#00d800" />
<rect x="764" y="225" width="2" height="1" fill="#00d800" />
<rect x="772" y="263" width="2" height="1" fill="#00d800" />
<rect x="780" y="296" width="2" height="1" fill="#00d800" />
<rect x="788" y="296" width="2" height="1" fill="#00d800" />
<rect x="796" y="310" width="2" height="1" fill="#00d800" />
<rect x="804" y="317" width="2" height="1" fill="#00d800" />
<rect x="820" y="312" width="2" height="1" fill="#00d800" />
<rect x="828" y="318" width="2" height="1" fill="#00d800" />
<rect x="836" y="322" width="2" height="1" fill="#00d800" />
<rect x="844" y="327" width="2" height="1" fill="#00d800" />
<rect x="852" y="330" width="2" height="1" fill="#00d800" />
<rect x="860" y="358" width="2" height="1" fill="#00d800" />
<rect x="868" y="427" width="2" height="1" fill="#00d800" />
<rect x="876" y="428" width="2" height="1" fill="#00d800" />
<rect x="881" y="414" width="2" height="1" fill="#00d800" />
<rect x="884" y="405" width="2" height="1" fill="#00d800" />
</g>
<g shape-rendering="crispEdges">
<rect x="11" y="231" width="1" height="11" fill="#0000ff" />
<rect x="11" y="231" width="3" height="6" fill="#00ffff" />
<rect x="19" y="170" width="1" height="64" fill="#0000ff" />
<rect x="17" y="201" width="5" height="33" fill="#00ffff" />
<rect x="27" y="165" width="1" height="55" fill="#0000ff" />
<rect x="25" y="196" width="5" height="22" fill="#00ffff" />
<rect x="35" y="207" width="1" height="61" fill="#ff0000" />
<rect x="33" y="207" width="5" height="24" fill="#ffff00" />
<rect x="43" y="191" width="1" height="54" fill="#0000ff" />
<rect x="41" y="216" width="5" height="4" fill="#00ffff" />
<rect x="51" y="186" width="1" height="32" fill="#0000ff" />
<rect x="49" y="194" width="5" height="24" fill="#00ffff" />
<rect x="59" y="162" width="1" height="45" fill="#0000ff" />
<rect x="57" y="181" width="5" height="26" fill="#00ffff" />
<rect x="67" y="151" width="1" height="44" fill="#0000ff" />
<rect x="65" y="162" width="5" height="32" fill="#00ffff" />
<rect x="75" y="140" width="1" height="39" fill="#0000ff" />
<rect x="73" y="151" width="5" height="28" fill="#00ffff" />
<rect x="83" y="150" width="1" height="49" fill="#ff0000" />
<rect x="81" y="159" width="5" height="11" fill="#ffff00" />
<rect x="91" y="164" width="1" height="36" fill="#ff0000" />
<rect x="89" y="164" width="5" height="21" fill="#ffff00" />
<rect x="99" y="174" width="1" height="54" fill="#ff0000" />
<rect x="97" y="174" width="5" height="29" fill="#ffff00" />
<rect x="107" y="188" width="1" height="54" fill="#ff0000" />
<rect x="105" y="188" width="5" height="27" fill="#ffff00" />
<rect x="115" y="201" width="1" height="67" fill="#ff0000" />
<rect x="113" y="201" width="5" height="39" fill="#ffff00" />
<rect x="123" y="220" width="1" height="42" fill="#ff0000" />
<rect x="121" y="220" width="5" height="33" fill="#ffff00" />
<rect x="131" y="236" width="1" height="60" fill="#ff0000" />
<rect x="129" y="236" width="5" height="35" fill="#ffff00" />
<rect x="139" y="253" width="1" height="29" fill="#ff0000" />
<rect x="137" y="253" width="5" height="23" fill="#ffff00" />
<rect x="147" y="262" width="1" height="20" fill="#ff0000" />
<rect x="145" y="264" width="5" height="11" fill="#ffff00" />
<rect x="155" y="265" width="1" height="28" fill="#ff0000" />
<rect x="153" y="268" width="5" height="10" fill="#ffff00" />
<rect x="163" y="273" width="1" height="27" fill="#ff0000" />
<rect x="161" y="273" width="5" height="13" fill="#ffff00" />
<rect x="171" y="273" width="1" height="26" fill="#ff0000" />
<rect x="169" y="279" width="5" height="9" fill="#ffff00" />
<rect x="179" y="283" width="1" height="31" fill="#ff0000" />
<rect x="177" y="283" width="5" height="15" fill="#ffff00" />
<rect x="187" y="290" width="1" height="54" fill="#ff0000" />
<rect x="185" y="290" width="5" height="24" fill="#ffff00" />
<rect x="195" y="302" width="1" height="33" fill="#ff0000" />
<rect x="193" y="302" width="5" height="22" fill="#ffff00" />
<rect x="203" y="307" width="1" height="45" fill="#ff0000" />
<rect x="201" y="312" width="5" height="16" fill="#ffff00" />
<rect x="211" y="285" width="1" height="46" fill="#0000ff" />
<rect x="209" y="306" width="5" height="15" fill="#00ffff" />
<rect x="219" y="283" width="1" height="52" fill="#0000ff" />
<rect x="217" y="309" width="5" height="5" fill="#00ffff" />
<rect x="227" y="300" width="1" height="31" fill="#ff0000" />
<rect x="225" y="311" width="5" height="8" fill="#ffff00" />
<rect x="235" y="293" width="1" height="22" fill="#0000ff" />
<rect x="233" y="293" width="5" height="22" fill="#00ffff" />
<rect x="243" y="275" width="1" height="54" fill="#0000ff" />
<rect x="241" y="302" width="5" height="3" fill="#00ffff" />
<rect x="251" y="302" width="1" height="36" fill="#ff0000" />
<rect x="249" y="303" width="5" height="18" fill="#ffff00" />
<rect x="259" y="276" width="1" height="61" fill="#0000ff" />
<rect x="257" y="310" width="5" height="3" fill="#00ffff" />
<rect x="267" y="281" width="1" height="48" fill="#0000ff" />
<rect x="265" y="306" width="5" height="6" fill="#00ffff" />
<rect x="275" y="289" width="1" height="29" fill="#0000ff" />
<rect x="273" y="301" width="5" height="8" fill="#00ffff" />
<rect x="283" y="268" width="1" height="42" fill="#0000ff" />
<rect x="281" y="285" width="5" height="20" fill="#00ffff" />
<rect x="291" y="245" width="1" height="51" fill="#0000ff" />
<rect x="289" y="263" width="5" height="33" fill="#00ffff" />
<rect x="299" y="256" width="1" height="37" fill="#0000ff" />
<rect x="297" y="269" width="5" height="11" fill="#00ffff" />
<rect x="307" y="258" width="1" height="28" fill="#0000ff" />
<rect x="305" y="269" width="5" height="6" fill="#00ffff" />
<rect x="315" y="253" width="1" height="20" fill="#0000ff" />
<rect x="313" y="259" width="5" height="14" fill="#00ffff" />
<rect x="323" y="253" width="1" height="32" fill="#0000ff" />
<rect x="321" y="264" width="5" height="2" fill="#00ffff" />
<rect x="331" y="249" width="1" height="26" fill="#0000ff" />
<rect x="329" y="264" width="5" height="2" fill="#00ffff" />
<rect x="339" y="256" width="1" height="26" fill="#ff0000" />
<rect x="337" y="265" width="5" height="4" fill="#ffff00" />
<rect x="347" y="256" width="1" height="32" fill="#ff0000" />
<rect x="345" y="266" width="5" height="4" fill="#ffff00" />
<rect x="355" y="254" width="1" height="23" fill="#0000ff" />
<rect x="353" y="262" width="5" height="7" fill="#00ffff" />
<rect x="363" y="261" width="1" height="16" fill="#ff0000" />
<rect x="361" y="265" width="5" height="4" fill="#ffff00" />
<rect x="371" y="256" width="1" height="24" fill="#ff0000" />
<rect x="369" y="266" width="5" height="6" fill="#ffff00" />
<rect x="379" y="269" width="1" height="24" fill="#ff0000" />
<rect x="377" y="269" width="5" height="12" fill="#ffff00" />
<rect x="387" y="266" width="1" height="17" fill="#ff0000" />
<rect x="385" y="274" width="5" height="5" fill="#ffff00" />
<rect x="395" y="276" width="1" height="13" fill="#ff0000" />
<rect x="393" y="276" width="5" height="7" fill="#ffff00" />
<rect x="403" y="277" width="1" height="19" fill="#ff0000" />
<rect x="401" y="279" width="5" height="8" fill="#ffff00" />
<rect x="411" y="283" width="1" height="21" fill="#ff0000" />
<rect x="409" y="283" width="5" height="14" fill="#ffff00" />
<rect x="419" y="289" width="1" height="16" fill="#ff0000" />
<rect x="417" y="289" width="5" height="11" fill="#ffff00" />
<rect x="427" y="269" width="1" height="26" fill="#0000ff" />
<rect x="425" y="283" width="5" height="12" fill="#00ffff" />
<rect x="435" y="269" width="1" height="21" fill="#0000ff" />
<rect x="433" y="274" width="5" height="16" fill="#00ffff" />
<rect x="443" y="268" width="1" height="14" fill="#0000ff" />
<rect x="441" y="273" width="5" height="9" fill="#00ffff" />
<rect x="451" y="269" width="1" height="11" fill="#0000ff" />
<rect x="449" y="274" width="5" height="4" fill="#00ffff" />
<rect x="459" y="272" width="1" height="9" fill="#0000ff" />
<rect x="457" y="275" width="5" height="2" fill="#00ffff" />
<rect x="467" y="270" width="1" height="18" fill="#ff0000" />
<rect x="465" y="276" width="5" height="5" fill="#ffff00" />
<rect x="475" y="268" width="1" height="21" fill="#ff0000" />
<rect x="473" y="277" width="5" height="2" fill="#ffff00" />
<rect x="483" y="265" width="1" height="23" fill="#0000ff" />
<rect x="481" y="273" width="5" height="6" fill="#00ffff" />
<rect x="491" y="266" width="1" height="14" fill="#0000ff" />
<rect x="489" y="273" width="5" height="3" fill="#00ffff" />
<rect x="499" y="269" width="1" height="15" fill="#ff0000" />
<rect x="497" y="274" width="5" height="5" fill="#ffff00" />
<rect x="507" y="269" width="1" height="17" fill="#ff0000" />
<rect x="505" y="276" width="5" height="3" fill="#ffff00" />
<rect x="515" y="272" width="1" height="6" fill="#0000ff" />
<rect x="513" y="274" width="5" height="4" fill="#00ffff" />
<rect x="523" y="275" width="1" height="6" fill="#ff0000" />
<rect x="521" y="276" width="5" height="2" fill="#ffff00" />
<rect x="531" y="275" width="1" height="13" fill="#ff0000" />
<rect x="529" y="277" width="5" height="2" fill="#ffff00" />
<rect x="539" y="268" width="1" height="11" fill="#0000ff" />
<rect x="537" y="274" width="5" height="5" fill="#00ffff" />
<rect x="547" y="269" width="1" height="10" fill="#0000ff" />
<rect x="545" y="273" width="5" height="4" fill="#00ffff" />
<rect x="555" y="264" width="1" height="11" fill="#0000ff" />
<rect x="553" y="272" width="5" height="3" fill="#00ffff" />
<rect x="563" y="258" width="1" height="32" fill="#ff0000" />
<rect x="561" y="273" width="5" height="4" fill="#ffff00" />
<rect x="571" y="275" width="1" height="27" fill="#ff0000" />
<rect x="569" y="275" width="5" height="13" fill="#ffff00" />
<rect x="579" y="269" width="1" height="13" fill="#0000ff" />
<rect x="577" y="276" width="5" height="6" fill="#00ffff" />
<rect x="587" y="270" width="1" height="18" fill="#0000ff" />
<rect x="585" y="276" width="5" height="3" fill="#00ffff" />
<rect x="595" y="269" width="1" height="11" fill="#0000ff" />
<rect x="593" y="276" width="5" height="2" fill="#00ffff" />
<rect x="603" y="277" width="1" height="22" fill="#ff0000" />
<rect x="601" y="277" width="5" height="9" fill="#ffff00" />
<rect x="611" y="273" width="1" height="17" fill="#ff0000" />
<rect x="609" y="283" width="5" height="5" fill="#ffff00" />
<rect x="619" y="268" width="1" height="17" fill="#0000ff" />
<rect x="617" y="275" width="5" height="6" fill="#00ffff" />
<rect x="627" y="268" width="1" height="11" fill="#0000ff" />
<rect x="625" y="273" width="5" height="6" fill="#00ffff" />
<rect x="635" y="272" width="1" height="8" fill="#ff0000" />
<rect x="633" y="275" width="5" height="3" fill="#ffff00" />
<rect x="643" y="262" width="1" height="15" fill="#0000ff" />
<rect x="641" y="265" width="5" height="12" fill="#00ffff" />
<rect x="651" y="250" width="1" height="23" fill="#0000ff" />
<rect x="649" y="258" width="5" height="13" fill="#00ffff" />
<rect x="659" y="250" width="1" height="15" fill="#0000ff" />
<rect x="657" y="256" width="5" height="9" fill="#00ffff" />
<rect x="667" y="257" width="1" height="18" fill="#ff0000" />
<rect x="665" y="260" width="5" height="3" fill="#ffff00" />
<rect x="675" y="258" width="1" height="17" fill="#ff0000" />
<rect x="673" y="261" width="5" height="5" fill="#ffff00" />
<rect x="683" y="261" width="1" height="16" fill="#ff0000" />
<rect x="681" y="263" width="5" height="6" fill="#ffff00" />
<rect x="691" y="256" width="1" height="11" fill="#0000ff" />
<rect x="689" y="260" width="5" height="7" fill="#00ffff" />
<rect x="699" y="250" width="1" height="14" fill="#0000ff" />
<rect x="697" y="257" width="5" height="7" fill="#00ffff" />
<rect x="707" y="236" width="1" height="27" fill="#0000ff" />
<rect x="705" y="252" width="5" height="9" fill="#00ffff" />
<rect x="715" y="247" width="1" height="14" fill="#0000ff" />
<rect x="713" y="254" width="5" height="3" fill="#00ffff" />
<rect x="723" y="246" width="1" height="19" fill="#ff0000" />
<rect x="721" y="255" width="5" height="1" fill="#ffff00" />
<rect x="731" y="250" width="1" height="10" fill="#ff0000" />
<rect x="729" y="255" width="5" height="3" fill="#ffff00" />
<rect x="739" y="230" width="1" height="33" fill="#0000ff" />
<rect x="737" y="247" width="5" height="10" fill="#00ffff" />
<rect x="747" y="240" width="1" height="14" fill="#0000ff" />
<rect x="745" y="245" width="5" height="7" fill="#00ffff" />
<rect x="755" y="230" width="1" height="19" fill="#0000ff" />
<rect x="753" y="240" width="5" height="9" fill="#00ffff" />
<rect x="763" y="215" width="1" height="30" fill="#0000ff" />
<rect x="761" y="229" width="5" height="16" fill="#00ffff" />
<rect x="771" y="224" width="1" height="41" fill="#ff0000" />
<rect x="769" y="236" width="5" height="9" fill="#ffff00" />
<rect x="779" y="240" width="1" height="62" fill="#ff0000" />
<rect x="777" y="240" width="5" height="40" fill="#ffff00" />
<rect x="787" y="259" width="1" height="47" fill="#ff0000" />
<rect x="785" y="259" width="5" height="36" fill="#ffff00" />
<rect x="795" y="276" width="1" height="36" fill="#ff0000" />
<rect x="793" y="276" width="5" height="24" fill="#ffff00" />
<rect x="803" y="288" width="1" height="35" fill="#ff0000" />
<rect x="801" y="288" width="5" height="26" fill="#ffff00" />
<rect x="811" y="300" width="1" height="24" fill="#ff0000" />
<rect x="809" y="300" width="5" height="13" fill="#ffff00" />
<rect x="819" y="292" width="1" height="46" fill="#ff0000" />
<rect x="817" y="306" width="5" height="11" fill="#ffff00" />
<rect x="827" y="309" width="1" height="26" fill="#ff0000" />
<rect x="825" y="311" width="5" height="11" fill="#ffff00" />
<rect x="835" y="300" width="1" height="28" fill="#ff0000" />
<rect x="833" y="316" width="5" height="1" fill="#ffff00" />
<rect x="843" y="306" width="1" height="22" fill="#ff0000" />
<rect x="841" y="316" width="5" height="5" fill="#ffff00" />
<rect x="851" y="309" width="1" height="30" fill="#ff0000" />
<rect x="849" y="318" width="5" height="8" fill="#ffff00" />
<rect x="859" y="321" width="1" height="40" fill="#ff0000" />
<rect x="857" y="321" width="5" height="26" fill="#ffff00" />
<rect x="867" y="334" width="1" height="98" fill="#ff0000" />
<rect x="865" y="334" width="5" height="60" fill="#ffff00" />
<rect x="875" y="363" width="1" height="82" fill="#ff0000" />
<rect x="873" y="363" width="5" height="62" fill="#ffff00" />
<rect x="883" y="394" width="1" height="27" fill="#ff0000" />
<rect x="881" y="394" width="5" height="19" fill="#ffff00" />
<rect x="891" y="388" width="1" height="25" fill="#ff0000" />
<rect x="891" y="388" width="12" height="1" fill="#ffff00" />
<rect x="235" y="86" width="1" height="370" fill="#00ff00" />
<rect x="235" y="459" width="1" height="182" fill="#00ff00" />
<rect x="643" y="86" width="1" height="370" fill="#00ff00" />
<rect x="643" y="459" width="1" height="182" fill="#00ff00" />
<rect x="11" y="403" width="1117" height="1" fill="#ffff00" />
<rect x="11" y="407" width="1117" height="1" fill="#00ffff" />
</g>
<polyline points="11,229.6 32.6,229 43.8,228 54,225.5 65,220.4 77.4,214.3 89.6,209.6 99.7,207.8 108,207.8 118,209.2 132.3,212.3 146.6,215.3 160.8,219.4 175,226.5 189.3,236.7 203.6,245.9 217.8,256 226,264.5 235,273 245.4,282.2 257.6,291.3 268.8,296.4 275.9,298.5 286,298.9 306.4,298 322.7,296 337,294 347,289.9 355.3,286.2 367.5,284.2 377.7,282.2 387.9,279.7 400,277.7 418.4,276 430.6,275 449,274.6 463,275 475.4,277 505.9,278.4 536.4,279 556.8,277.2 577,276.4 638.2,276.4 648.4,275.5 668.7,273.3 688,271.5 705.4,268.9 717.6,267.9 733.9,266 737.9,264 754.2,262 762.4,257.9 770.5,257.3 790.9,259.3 807.1,264.4 827.5,272.5 843.8,278.6 858,285.8 868.2,296 880.4,308 888.6,315.3" fill="none" stroke="#ffffff" stroke-width="1" stroke-dasharray="3,3" shape-rendering="crispEdges"/>
<polyline points="11,214 19.3,204.7 26.5,202.7 35.6,204 43.8,198 52,191 59,182.7 67,168.5 76.3,156.3 90,140 110,128 150,122 185,131 191,129.8 196,128.3 203.2,130.4 211.4,136.5 219.5,147 228,162.4 236,182.7 240,195 249.4,215 257.6,231.3 266.7,249.6 275.9,255.7 283,260.2 290,257.3 299.3,256.7 315.6,249.2 324.7,246.6 332.9,242.5 341,241.5 347,238 357.3,236.4 375.6,236.4 381.7,238.8 396,239.4 404,243.5 414.3,244.9 420.4,247 440.8,248.6 455,248.9 463,249.9 473.3,253.5 485.5,255 498.8,255.4 505.9,259 516,261.7 536.4,261.7 542.5,260.7 556.8,259.4 565,260 573,264 580.2,266.2 636.2,266.2 642.3,263 650.4,259 658.6,256 666.7,253.3 681,252.9 688,251 695,249 715.5,245 730.8,244.6 738,240.4 754.2,234.9 762.4,231.4 772.5,230.8 779.7,227.3 786.8,226.7 795,221.6 803,218.6 811.2,217.2 818.3,213.9 831.6,213.5 837.7,211.5 843.8,213 854,213 859,211.5 863,205.4 867.2,199.2 873.3,196.8 881.4,196.8 888.6,199.2 891.6,199.9" fill="none" stroke="#00ff00" stroke-width="2" stroke-linejoin="round" shape-rendering="crispEdges"/>
<polyline points="11,247.9 19.3,255 35.6,255.6 53,262 61,266.2 69.2,272.8 79.4,273.5 89.6,269.5 99.7,265.8 109,265.8 118,270.6 126.2,275 132.3,280.4 146.6,292.7 156.7,299.8 167,310 177,320 183.2,328.3 188.3,340.5 195.4,350.7 203.6,359.8 211.7,364.9 218.8,369.6 227,369.6 234,361.9 240,359.8 257.6,349.4 267.7,342.2 275.9,340.2 283,338.6 292,339.2 306.4,341.6 314.6,343.6 324.7,344.7 341,344.3 349,340.2 357.3,335 365.5,331 371.6,330 379.7,323.9 387.9,319.8 396,318.8 404,312.7 412.3,309 420.4,305.6 428.6,302 436.7,300 446.9,299 455,298.5 459,299.7 475.4,299.7 477.4,298.7 505.9,298.3 516,297 558.8,296.7 566,294 573,289.6 581.2,285.9 595.5,285.9 603.6,288.5 618.9,288.5 628,286.9 635,286.9 642.3,290.6 648.4,292 717.6,291.9 723.7,288.8 746,287.8 754.2,285.8 766.4,283.3 772.5,283.3 778.6,287.8 786.8,291.9 795,299 803,309 810.9,316.4 821,325.5 834.3,336.7 841.4,342.2 849.6,348.9 855.7,355 859.7,362 863.8,376.4 867.9,390.7 874,407 880,419 887.2,429.4 891.6,435.9" fill="none" stroke="#ff0000" stroke-width="2" stroke-linejoin="round" shape-rendering="crispEdges"/>
<circle cx="83" cy="150.5" r="8" fill="#fff"/>
<circle cx="139" cy="289.2" r="8" fill="#fff"/>
<circle cx="307" cy="252.9" r="8" fill="#fff"/>
<circle cx="611" cy="289" r="8" fill="#fff"/>
<circle cx="651.5" cy="248.9" r="8" fill="#fff"/>
<circle cx="659.4" cy="248.9" r="8" fill="#fff"/>
<circle cx="827" cy="332" r="8" fill="#fff"/>
<path d="M898.800 86 h9.600 l-4.800 5.400z" fill="#6e86a6"/>
<rect x="902.5" y="376.500" width="73" height="24" fill="#000" stroke="#ffff00" shape-rendering="crispEdges"/>
<text x="903.6" y="397" font-size="21.5" fill="#ffff00" transform="matrix(0.915 0 0 1 76.806 0)">1.36433</text>
<text x="949.5" y="451" font-size="15.8" fill="#eec200" >Spread: 10. Time: 03:40</text>
<rect x="1130" y="397" width="41" height="5" fill="#ffff00" shape-rendering="crispEdges"/>
<rect x="1130" y="401" width="41" height="11" fill="#00ffff" shape-rendering="crispEdges"/>
<clipPath id="yl"><rect x="1130" y="397" width="41" height="4"/></clipPath>
<g clip-path="url(#yl)">
<text x="1134.5" y="406" font-size="10.0" fill="#000" transform="matrix(0.9000 0 0 1 113.450 0)"  stroke="#000" stroke-width="0.15">1.36395</text>
</g>
<text x="1134.5" y="410" font-size="10.0" fill="#000" transform="matrix(0.9000 0 0 1 113.450 0)"  stroke="#000" stroke-width="0.15">1.36385</text>
<text x="1065.5" y="98" font-size="10.0" fill="#fff" transform="matrix(0.9400 0 0 1 63.930 0)"  stroke="#fff" stroke-width="0.15">Auto Profit</text>
<circle cx="1117.5" cy="95" r="5" fill="none" stroke="#fff" stroke-width="1"/><circle cx="1115.700" cy="93.500" r="0.800" fill="#fff"/><circle cx="1119.300" cy="93.500" r="0.800" fill="#fff"/><path d="M1114.800 96.300 q2.700 3 5.400 0" stroke="#fff" fill="none" stroke-width="0.9"/>
<path d="M14 96 h7.500 l-3.750 -4.500z" fill="#fff"/>
<text x="26" y="97" font-size="10.0" fill="#fff" transform="matrix(0.9320 0 0 1 1.768 0)"  stroke="#fff" stroke-width="0.15">EURUSD,M15&#160;&#160;1.36390 1.36435 1.36371 1.36385</text>
<text x="16" y="471" font-size="10.0" fill="#fff" transform="matrix(0.9350 0 0 1 1.040 0)"  stroke="#fff" stroke-width="0.15">Fiji Trend 1.3643</text>
<g fill="none" stroke-width="1" shape-rendering="crispEdges">
<clipPath id="c0"><rect x="11" y="459" width="20" height="182"/></clipPath>
<path d="M14.9,530.4 L8.7,530.4 L10.5,528.6 L6.1,524.2 L8.7,521.6 L13.1,526.0 L14.9,524.2 Z" stroke="#ffff00" clip-path="url(#c0)"/>
<path d="M30.9,516.6 L24.7,516.6 L26.5,518.4 L22.1,522.8 L24.7,525.4 L29.1,521.0 L30.9,522.8 Z" stroke="#00ffff"/>
<path d="M46.9,518.9 L40.7,518.9 L42.5,517.1 L38.1,512.7 L40.7,510.1 L45.1,514.5 L46.9,512.7 Z" stroke="#ffff00"/>
<path d="M62.9,506.6 L56.7,506.6 L58.5,508.4 L54.1,512.8 L56.7,515.4 L61.1,511.0 L62.9,512.8 Z" stroke="#00ffff"/>
<path d="M70.9,499.8 L64.7,499.8 L66.5,501.6 L62.1,506.0 L64.7,508.6 L69.1,504.2 L70.9,506.0 Z" stroke="#00ffff"/>
<path d="M78.9,488.3 L72.7,488.3 L74.5,490.1 L70.1,494.5 L72.7,497.1 L77.1,492.7 L78.9,494.5 Z" stroke="#00ffff"/>
<path d="M86.9,485.6 L80.7,485.6 L82.5,487.4 L78.1,491.8 L80.7,494.4 L85.1,490.0 L86.9,491.8 Z" stroke="#00ffff"/>
<path d="M94.9,485.6 L88.7,485.6 L90.5,487.4 L86.1,491.8 L88.7,494.4 L93.1,490.0 L94.9,491.8 Z" stroke="#00ffff"/>
<path d="M110.9,483.8 L104.7,483.8 L106.5,482.0 L102.1,477.6 L104.7,475.0 L109.1,479.4 L110.9,477.6 Z" stroke="#ffff00"/>
<path d="M118.9,499.1 L112.7,499.1 L114.5,497.3 L110.1,492.9 L112.7,490.3 L117.1,494.7 L118.9,492.9 Z" stroke="#ffff00"/>
<path d="M126.9,510.9 L120.7,510.9 L122.5,509.1 L118.1,504.7 L120.7,502.1 L125.1,506.5 L126.9,504.7 Z" stroke="#ffff00"/>
<path d="M134.9,522.9 L128.7,522.9 L130.5,521.1 L126.1,516.7 L128.7,514.1 L133.1,518.5 L134.9,516.7 Z" stroke="#ffff00"/>
<path d="M142.9,531.7 L136.7,531.7 L138.5,529.9 L134.1,525.5 L136.7,522.9 L141.1,527.3 L142.9,525.5 Z" stroke="#ffff00"/>
<path d="M150.9,539.8 L144.7,539.8 L146.5,538.0 L142.1,533.6 L144.7,531.0 L149.1,535.4 L150.9,533.6 Z" stroke="#ffff00"/>
<path d="M158.9,543.9 L152.7,543.9 L154.5,542.1 L150.1,537.7 L152.7,535.1 L157.1,539.5 L158.9,537.7 Z" stroke="#ffff00"/>
<path d="M166.9,548.6 L160.7,548.6 L162.5,546.8 L158.1,542.4 L160.7,539.8 L165.1,544.2 L166.9,542.4 Z" stroke="#ffff00"/>
<path d="M174.9,552.0 L168.7,552.0 L170.5,550.2 L166.1,545.8 L168.7,543.2 L173.1,547.6 L174.9,545.8 Z" stroke="#ffff00"/>
<path d="M182.9,554.7 L176.7,554.7 L178.5,552.9 L174.1,548.5 L176.7,545.9 L181.1,550.3 L182.9,548.5 Z" stroke="#ffff00"/>
<path d="M190.9,561.2 L184.7,561.2 L186.5,559.4 L182.1,555.0 L184.7,552.4 L189.1,556.8 L190.9,555.0 Z" stroke="#ffff00"/>
<path d="M198.9,570.3 L192.7,570.3 L194.5,568.5 L190.1,564.1 L192.7,561.5 L197.1,565.9 L198.9,564.1 Z" stroke="#ffff00"/>
<path d="M206.9,575.0 L200.7,575.0 L202.5,573.2 L198.1,568.8 L200.7,566.2 L205.1,570.6 L206.9,568.8 Z" stroke="#ffff00"/>
<path d="M214.9,576.0 L208.7,576.0 L210.5,574.2 L206.1,569.8 L208.7,567.2 L213.1,571.6 L214.9,569.8 Z" stroke="#ffff00"/>
<path d="M222.9,578.4 L216.7,578.4 L218.5,576.6 L214.1,572.2 L216.7,569.6 L221.1,574.0 L222.9,572.2 Z" stroke="#ffff00"/>
<path d="M230.9,578.9 L224.7,578.9 L226.5,577.1 L222.1,572.7 L224.7,570.1 L229.1,574.5 L230.9,572.7 Z" stroke="#ffff00"/>
<path d="M246.9,578.0 L240.7,578.0 L242.5,579.8 L238.1,584.2 L240.7,586.8 L245.1,582.4 L246.9,584.2 Z" stroke="#00ffff"/>
<path d="M254.9,576.6 L248.7,576.6 L250.5,578.4 L246.1,582.8 L248.7,585.4 L253.1,581.0 L254.9,582.8 Z" stroke="#00ffff"/>
<path d="M262.9,576.6 L256.7,576.6 L258.5,578.4 L254.1,582.8 L256.7,585.4 L261.1,581.0 L262.9,582.8 Z" stroke="#00ffff"/>
<path d="M270.9,576.6 L264.7,576.6 L266.5,578.4 L262.1,582.8 L264.7,585.4 L269.1,581.0 L270.9,582.8 Z" stroke="#00ffff"/>
<path d="M278.9,576.6 L272.7,576.6 L274.5,578.4 L270.1,582.8 L272.7,585.4 L277.1,581.0 L278.9,582.8 Z" stroke="#00ffff"/>
<path d="M286.9,576.6 L280.7,576.6 L282.5,578.4 L278.1,582.8 L280.7,585.4 L285.1,581.0 L286.9,582.8 Z" stroke="#00ffff"/>
<path d="M294.9,568.9 L288.7,568.9 L290.5,570.7 L286.1,575.1 L288.7,577.7 L293.1,573.3 L294.9,575.1 Z" stroke="#00ffff"/>
<path d="M302.9,564.8 L296.7,564.8 L298.5,566.6 L294.1,571.0 L296.7,573.6 L301.1,569.2 L302.9,571.0 Z" stroke="#00ffff"/>
<path d="M310.9,557.6 L304.7,557.6 L306.5,559.4 L302.1,563.8 L304.7,566.4 L309.1,562.0 L310.9,563.8 Z" stroke="#00ffff"/>
<path d="M318.9,552.2 L312.7,552.2 L314.5,554.0 L310.1,558.4 L312.7,561.0 L317.1,556.6 L318.9,558.4 Z" stroke="#00ffff"/>
<path d="M326.9,551.0 L320.7,551.0 L322.5,552.8 L318.1,557.2 L320.7,559.8 L325.1,555.4 L326.9,557.2 Z" stroke="#00ffff"/>
<path d="M334.9,550.6 L328.7,550.6 L330.5,552.4 L326.1,556.8 L328.7,559.4 L333.1,555.0 L334.9,556.8 Z" stroke="#00ffff"/>
<path d="M342.9,550.2 L336.7,550.2 L338.5,552.0 L334.1,556.4 L336.7,559.0 L341.1,554.6 L342.9,556.4 Z" stroke="#00ffff"/>
<path d="M350.9,549.6 L344.7,549.6 L346.5,551.4 L342.1,555.8 L344.7,558.4 L349.1,554.0 L350.9,555.8 Z" stroke="#00ffff"/>
<path d="M358.9,549.6 L352.7,549.6 L354.5,551.4 L350.1,555.8 L352.7,558.4 L357.1,554.0 L358.9,555.8 Z" stroke="#00ffff"/>
<path d="M366.9,549.6 L360.7,549.6 L362.5,551.4 L358.1,555.8 L360.7,558.4 L365.1,554.0 L366.9,555.8 Z" stroke="#00ffff"/>
<path d="M374.9,549.6 L368.7,549.6 L370.5,551.4 L366.1,555.8 L368.7,558.4 L373.1,554.0 L374.9,555.8 Z" stroke="#00ffff"/>
<path d="M382.9,549.6 L376.7,549.6 L378.5,551.4 L374.1,555.8 L376.7,558.4 L381.1,554.0 L382.9,555.8 Z" stroke="#00ffff"/>
<path d="M390.9,549.6 L384.7,549.6 L386.5,551.4 L382.1,555.8 L384.7,558.4 L389.1,554.0 L390.9,555.8 Z" stroke="#00ffff"/>
<path d="M398.9,549.6 L392.7,549.6 L394.5,551.4 L390.1,555.8 L392.7,558.4 L397.1,554.0 L398.9,555.8 Z" stroke="#00ffff"/>
<path d="M406.9,549.6 L400.7,549.6 L402.5,551.4 L398.1,555.8 L400.7,558.4 L405.1,554.0 L406.9,555.8 Z" stroke="#00ffff"/>
<path d="M414.9,549.6 L408.7,549.6 L410.5,551.4 L406.1,555.8 L408.7,558.4 L413.1,554.0 L414.9,555.8 Z" stroke="#00ffff"/>
<path d="M430.9,564.0 L424.7,564.0 L426.5,562.2 L422.1,557.8 L424.7,555.2 L429.1,559.6 L430.9,557.8 Z" stroke="#ffff00"/>
<path d="M438.9,564.0 L432.7,564.0 L434.5,562.2 L430.1,557.8 L432.7,555.2 L437.1,559.6 L438.9,557.8 Z" stroke="#ffff00"/>
<path d="M446.9,564.0 L440.7,564.0 L442.5,562.2 L438.1,557.8 L440.7,555.2 L445.1,559.6 L446.9,557.8 Z" stroke="#ffff00"/>
<path d="M454.9,564.0 L448.7,564.0 L450.5,562.2 L446.1,557.8 L448.7,555.2 L453.1,559.6 L454.9,557.8 Z" stroke="#ffff00"/>
<path d="M462.9,564.0 L456.7,564.0 L458.5,562.2 L454.1,557.8 L456.7,555.2 L461.1,559.6 L462.9,557.8 Z" stroke="#ffff00"/>
<path d="M470.9,564.0 L464.7,564.0 L466.5,562.2 L462.1,557.8 L464.7,555.2 L469.1,559.6 L470.9,557.8 Z" stroke="#ffff00"/>
<path d="M478.9,564.0 L472.7,564.0 L474.5,562.2 L470.1,557.8 L472.7,555.2 L477.1,559.6 L478.9,557.8 Z" stroke="#ffff00"/>
<path d="M494.9,552.6 L488.7,552.6 L490.5,554.4 L486.1,558.8 L488.7,561.4 L493.1,557.0 L494.9,558.8 Z" stroke="#00ffff"/>
<path d="M502.9,552.6 L496.7,552.6 L498.5,554.4 L494.1,558.8 L496.7,561.4 L501.1,557.0 L502.9,558.8 Z" stroke="#00ffff"/>
<path d="M510.9,552.6 L504.7,552.6 L506.5,554.4 L502.1,558.8 L504.7,561.4 L509.1,557.0 L510.9,558.8 Z" stroke="#00ffff"/>
<path d="M518.9,552.6 L512.7,552.6 L514.5,554.4 L510.1,558.8 L512.7,561.4 L517.1,557.0 L518.9,558.8 Z" stroke="#00ffff"/>
<path d="M526.9,552.6 L520.7,552.6 L522.5,554.4 L518.1,558.8 L520.7,561.4 L525.1,557.0 L526.9,558.8 Z" stroke="#00ffff"/>
<path d="M534.9,551.6 L528.7,551.6 L530.5,553.4 L526.1,557.8 L528.7,560.4 L533.1,556.0 L534.9,557.8 Z" stroke="#00ffff"/>
<path d="M542.9,551.6 L536.7,551.6 L538.5,553.4 L534.1,557.8 L536.7,560.4 L541.1,556.0 L542.9,557.8 Z" stroke="#00ffff"/>
<path d="M550.9,551.6 L544.7,551.6 L546.5,553.4 L542.1,557.8 L544.7,560.4 L549.1,556.0 L550.9,557.8 Z" stroke="#00ffff"/>
<path d="M558.9,549.6 L552.7,549.6 L554.5,551.4 L550.1,555.8 L552.7,558.4 L557.1,554.0 L558.9,555.8 Z" stroke="#00ffff"/>
<path d="M566.9,549.6 L560.7,549.6 L562.5,551.4 L558.1,555.8 L560.7,558.4 L565.1,554.0 L566.9,555.8 Z" stroke="#00ffff"/>
<path d="M582.9,555.4 L576.7,555.4 L578.5,553.6 L574.1,549.2 L576.7,546.6 L581.1,551.0 L582.9,549.2 Z" stroke="#ffff00"/>
<path d="M590.9,556.4 L584.7,556.4 L586.5,554.6 L582.1,550.2 L584.7,547.6 L589.1,552.0 L590.9,550.2 Z" stroke="#ffff00"/>
<path d="M598.9,557.4 L592.7,557.4 L594.5,555.6 L590.1,551.2 L592.7,548.6 L597.1,553.0 L598.9,551.2 Z" stroke="#ffff00"/>
<path d="M606.9,558.4 L600.7,558.4 L602.5,556.6 L598.1,552.2 L600.7,549.6 L605.1,554.0 L606.9,552.2 Z" stroke="#ffff00"/>
<path d="M614.9,559.8 L608.7,559.8 L610.5,558.0 L606.1,553.6 L608.7,551.0 L613.1,555.4 L614.9,553.6 Z" stroke="#ffff00"/>
<path d="M622.9,559.8 L616.7,559.8 L618.5,558.0 L614.1,553.6 L616.7,551.0 L621.1,555.4 L622.9,553.6 Z" stroke="#ffff00"/>
<path d="M630.9,559.8 L624.7,559.8 L626.5,558.0 L622.1,553.6 L624.7,551.0 L629.1,555.4 L630.9,553.6 Z" stroke="#ffff00"/>
<path d="M638.9,559.8 L632.7,559.8 L634.5,558.0 L630.1,553.6 L632.7,551.0 L637.1,555.4 L638.9,553.6 Z" stroke="#ffff00"/>
<path d="M654.9,545.6 L648.7,545.6 L650.5,547.4 L646.1,551.8 L648.7,554.4 L653.1,550.0 L654.9,551.8 Z" stroke="#00ffff"/>
<path d="M662.9,543.4 L656.7,543.4 L658.5,545.2 L654.1,549.6 L656.7,552.2 L661.1,547.8 L662.9,549.6 Z" stroke="#00ffff"/>
<path d="M670.9,542.0 L664.7,542.0 L666.5,543.8 L662.1,548.2 L664.7,550.8 L669.1,546.4 L670.9,548.2 Z" stroke="#00ffff"/>
<path d="M678.9,541.4 L672.7,541.4 L674.5,543.2 L670.1,547.6 L672.7,550.2 L677.1,545.8 L678.9,547.6 Z" stroke="#00ffff"/>
<path d="M686.9,540.8 L680.7,540.8 L682.5,542.6 L678.1,547.0 L680.7,549.6 L685.1,545.2 L686.9,547.0 Z" stroke="#00ffff"/>
<path d="M694.9,541.2 L688.7,541.2 L690.5,543.0 L686.1,547.4 L688.7,550.0 L693.1,545.6 L694.9,547.4 Z" stroke="#00ffff"/>
<path d="M702.9,541.4 L696.7,541.4 L698.5,543.2 L694.1,547.6 L696.7,550.2 L701.1,545.8 L702.9,547.6 Z" stroke="#00ffff"/>
<path d="M710.9,540.8 L704.7,540.8 L706.5,542.6 L702.1,547.0 L704.7,549.6 L709.1,545.2 L710.9,547.0 Z" stroke="#00ffff"/>
<path d="M718.9,540.0 L712.7,540.0 L714.5,541.8 L710.1,546.2 L712.7,548.8 L717.1,544.4 L718.9,546.2 Z" stroke="#00ffff"/>
<path d="M726.9,538.8 L720.7,538.8 L722.5,540.6 L718.1,545.0 L720.7,547.6 L725.1,543.2 L726.9,545.0 Z" stroke="#00ffff"/>
<path d="M734.9,537.9 L728.7,537.9 L730.5,539.7 L726.1,544.1 L728.7,546.7 L733.1,542.3 L734.9,544.1 Z" stroke="#00ffff"/>
<path d="M742.9,536.9 L736.7,536.9 L738.5,538.7 L734.1,543.1 L736.7,545.7 L741.1,541.3 L742.9,543.1 Z" stroke="#00ffff"/>
<path d="M750.9,535.3 L744.7,535.3 L746.5,537.1 L742.1,541.5 L744.7,544.1 L749.1,539.7 L750.9,541.5 Z" stroke="#00ffff"/>
<path d="M758.9,533.3 L752.7,533.3 L754.5,535.1 L750.1,539.5 L752.7,542.1 L757.1,537.7 L758.9,539.5 Z" stroke="#00ffff"/>
<path d="M766.9,528.8 L760.7,528.8 L762.5,530.6 L758.1,535.0 L760.7,537.6 L765.1,533.2 L766.9,535.0 Z" stroke="#00ffff"/>
<path d="M782.9,537.0 L776.7,537.0 L778.5,535.2 L774.1,530.8 L776.7,528.2 L781.1,532.6 L782.9,530.8 Z" stroke="#ffff00"/>
<path d="M790.9,542.7 L784.7,542.7 L786.5,540.9 L782.1,536.5 L784.7,533.9 L789.1,538.3 L790.9,536.5 Z" stroke="#ffff00"/>
<path d="M798.9,553.3 L792.7,553.3 L794.5,551.5 L790.1,547.1 L792.7,544.5 L797.1,548.9 L798.9,547.1 Z" stroke="#ffff00"/>
<path d="M806.9,565.1 L800.7,565.1 L802.5,563.3 L798.1,558.9 L800.7,556.3 L805.1,560.7 L806.9,558.9 Z" stroke="#ffff00"/>
<path d="M814.9,571.2 L808.7,571.2 L810.5,569.4 L806.1,565.0 L808.7,562.4 L813.1,566.8 L814.9,565.0 Z" stroke="#ffff00"/>
<path d="M822.9,575.2 L816.7,575.2 L818.5,573.4 L814.1,569.0 L816.7,566.4 L821.1,570.8 L822.9,569.0 Z" stroke="#ffff00"/>
<path d="M830.9,578.1 L824.7,578.1 L826.5,576.3 L822.1,571.9 L824.7,569.3 L829.1,573.7 L830.9,571.9 Z" stroke="#ffff00"/>
<path d="M838.9,580.1 L832.7,580.1 L834.5,578.3 L830.1,573.9 L832.7,571.3 L837.1,575.7 L838.9,573.9 Z" stroke="#ffff00"/>
<path d="M846.9,581.4 L840.7,581.4 L842.5,579.6 L838.1,575.2 L840.7,572.6 L845.1,577.0 L846.9,575.2 Z" stroke="#ffff00"/>
<path d="M854.9,583.8 L848.7,583.8 L850.5,582.0 L846.1,577.6 L848.7,575.0 L853.1,579.4 L854.9,577.6 Z" stroke="#ffff00"/>
<path d="M862.9,587.9 L856.7,587.9 L858.5,586.1 L854.1,581.7 L856.7,579.1 L861.1,583.5 L862.9,581.7 Z" stroke="#ffff00"/>
<path d="M870.9,602.7 L864.7,602.7 L866.5,600.9 L862.1,596.5 L864.7,593.9 L869.1,598.3 L870.9,596.5 Z" stroke="#ffff00"/>
<path d="M878.9,614.7 L872.7,614.7 L874.5,612.9 L870.1,608.5 L872.7,605.9 L877.1,610.3 L878.9,608.5 Z" stroke="#ffff00"/>
<path d="M886.9,627.9 L880.7,627.9 L882.5,626.1 L878.1,621.7 L880.7,619.1 L885.1,623.5 L886.9,621.7 Z" stroke="#ffff00"/>
<path d="M894.9,637.4 L888.7,637.4 L890.5,635.6 L886.1,631.2 L888.7,628.6 L893.1,633.0 L894.9,631.2 Z" stroke="#ffff00"/>
</g>
<clipPath id="sub"><rect x="11" y="459" width="1117" height="182"/></clipPath><g clip-path="url(#sub)">
<polygon points="19.0,513.6 28.5,523.6 28.5,529.6 21.8,523.1 21.8,537.8 16.2,537.8 16.2,523.1 9.5,529.6 9.5,523.6" fill="#00ff00"/>
<polygon points="35.5,519.0 45.0,509.0 45.0,503.0 38.3,509.5 38.3,495.5 32.7,495.5 32.7,509.5 26.0,503.0 26.0,509.0" fill="#ff0000"/>
<polygon points="51.0,502.4 60.5,512.4 60.5,518.4 53.8,511.9 53.8,526.6 48.2,526.6 48.2,511.9 41.5,518.4 41.5,512.4" fill="#00ff00"/>
<polygon points="99.7,476.4 109.2,466.4 109.2,460.4 102.5,466.9 102.5,452.9 96.9,452.9 96.9,466.9 90.2,460.4 90.2,466.4" fill="#ff0000"/>
<polygon points="235.0,576.5 244.5,586.5 244.5,592.5 237.8,586.0 237.8,600.7 232.2,600.7 232.2,586.0 225.5,592.5 225.5,586.5" fill="#00ff00"/>
<polygon points="419.4,566.2 428.9,556.2 428.9,550.2 422.2,556.7 422.2,542.7 416.6,542.7 416.6,556.7 409.9,550.2 409.9,556.2" fill="#ff0000"/>
<polygon points="483.0,547.4 492.5,557.4 492.5,563.4 485.8,556.9 485.8,571.6 480.2,571.6 480.2,556.9 473.5,563.4 473.5,557.4" fill="#00ff00"/>
<polygon points="571.4,558.0 580.9,548.0 580.9,542.0 574.2,548.5 574.2,534.5 568.6,534.5 568.6,548.5 561.9,542.0 561.9,548.0" fill="#ff0000"/>
<polygon points="643.0,546.4 652.5,556.4 652.5,562.4 645.8,555.9 645.8,570.6 640.2,570.6 640.2,555.9 633.5,562.4 633.5,556.4" fill="#00ff00"/>
<polygon points="771.5,533.0 781.0,523.0 781.0,517.0 774.3,523.5 774.3,509.5 768.7,509.5 768.7,523.5 762.0,517.0 762.0,523.0" fill="#ff0000"/>
</g>
<defs><linearGradient id="gb1" x1="0" y1="0" x2="0" y2="1"><stop offset="0" stop-color="#5252f2"/><stop offset="1" stop-color="#2626d4"/></linearGradient><linearGradient id="gb2" x1="0" y1="0" x2="0" y2="1"><stop offset="0" stop-color="#3636e2"/><stop offset="1" stop-color="#0a0aac"/></linearGradient><linearGradient id="gg" x1="0" y1="0" x2="0" y2="1"><stop offset="0" stop-color="#f0f0f0"/><stop offset="0.5" stop-color="#dcdcdc"/><stop offset="0.5" stop-color="#c8c8c8"/><stop offset="1" stop-color="#d0d0d0"/></linearGradient></defs>
<rect x="13" y="100" width="177" height="51" fill="#000" />
<rect x="14" y="101" width="41" height="21" fill="url(#gb1)" />
<rect x="149" y="101" width="40" height="21" fill="url(#gb1)" />
<rect x="14" y="121" width="87" height="28" fill="url(#gb2)" />
<rect x="103" y="121" width="86" height="28" fill="url(#gb2)" />
<rect x="18" y="121" width="33" height="1" fill="#9a9af0" />
<rect x="152" y="121" width="33" height="1" fill="#9a9af0" />
<rect x="57.5" y="101.5" width="89" height="17" fill="#fff" stroke="#9a9a9a" stroke-width="1"/>
<rect x="58.5" y="102.5" width="15" height="15" fill="url(#gg)" stroke="#a0a0a0" stroke-width="0.6"/>
<rect x="129.5" y="102.5" width="15.5" height="15" fill="url(#gg)" stroke="#a0a0a0" stroke-width="0.6"/>
<path d="M63 108 h6 l-3 3.500z" fill="#4a6aa8"/><path d="M134.200 111.500 h6 l-3 -3.500z" fill="#4a6aa8"/>
<text x="103" y="114.5" font-size="10.5" fill="#000" >0.01</text>
<text x="23.6" y="114.8" font-size="10" fill="#fff" textLength="21" lengthAdjust="spacingAndGlyphs">SELL</text>
<text x="158.5" y="114.8" font-size="10" fill="#fff" textLength="19" lengthAdjust="spacingAndGlyphs">BUY</text>
<text x="27.5" y="143" font-size="10.5" fill="#fff" font-weight="bold">1.36</text>
<text x="52" y="143.5" font-size="22.5" fill="#fff" stroke="#2626c6" stroke-width="0.4" textLength="22" lengthAdjust="spacingAndGlyphs">38</text>
<text x="78.5" y="134.5" font-size="10" fill="#fff" font-weight="bold">5</text>
<text x="115.5" y="143" font-size="10.5" fill="#fff" font-weight="bold">1.36</text>
<text x="140" y="143.5" font-size="22.5" fill="#fff" stroke="#2626c6" stroke-width="0.4" textLength="22" lengthAdjust="spacingAndGlyphs">39</text>
<text x="166.5" y="134.5" font-size="10" fill="#fff" font-weight="bold">5</text>
</svg></body></html>
